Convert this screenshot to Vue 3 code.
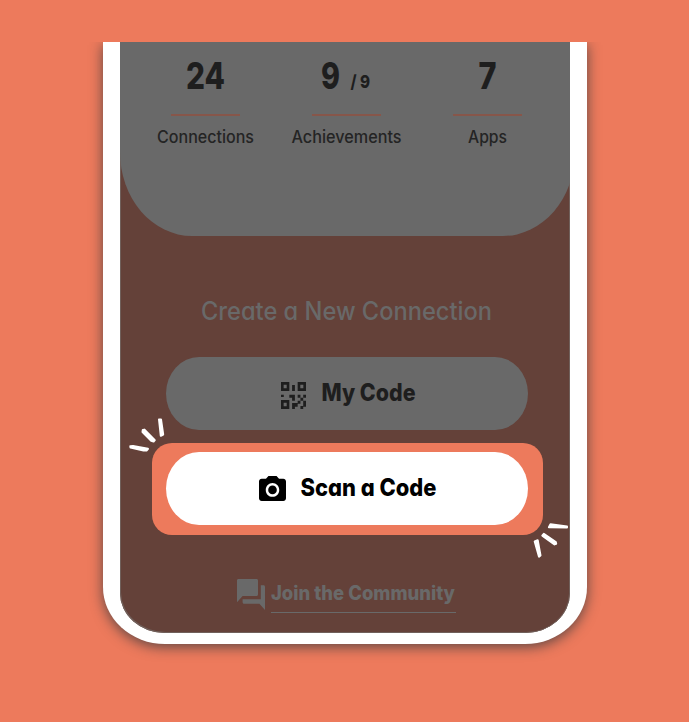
<script setup>
const stats = [
  { label: 'Connections', labelWidth: 97, value: '24', valueX: 51, valueWidth: 39 },
  { label: 'Achievements', labelWidth: 110, value: '9', valueX: 45, valueWidth: 19, total: '/ 9' },
  { label: 'Apps', labelWidth: 39, value: '7', valueX: 61.5, valueWidth: 18 },
]
</script>

<template>
  <main class="stage">
    <div class="phone">
      <div class="screen">
        <section class="profile">
          <div v-for="s in stats" :key="s.label" class="stat">
            <svg class="value" width="141" height="72">
              <text :x="s.valueX" y="46.5" :textLength="s.valueWidth" lengthAdjust="spacingAndGlyphs">{{ s.value }}</text>
              <text v-if="s.total" class="total" x="74.5" y="46" textLength="19.5" lengthAdjust="spacingAndGlyphs">{{ s.total }}</text>
            </svg>
            <hr />
            <svg class="caption" width="141" height="36">
              <text :x="70.5 - s.labelWidth / 2" y="18" :textLength="s.labelWidth" lengthAdjust="spacingAndGlyphs">{{ s.label }}</text>
            </svg>
          </div>
        </section>

        <svg class="heading" width="310" height="40">
          <text x="10" y="26" textLength="291" lengthAdjust="spacingAndGlyphs">Create a New Connection</text>
        </svg>

        <button class="pill">
          <svg class="qr" width="25" height="27" viewBox="3 3 18 18" preserveAspectRatio="none">
            <path fill-rule="evenodd" d="M3 3h6v6H3zM4.900 4.900v2.200h2.200V4.900zM15 3h6v6h-6zM16.900 4.900v2.200h2.200V4.900zM3 15h6v6H3zM4.900 16.900v2.200h2.200v-2.200zM11 5h2v4h-2zM3 11.500h2v1.500H3zM9 11.500h4v4h-2v-2H9zM15 11.500h2v2h-2zM19 11.500h2v2h-2zM17 13.500h2v2h-2zM15 15.500h2v2h-2v2h-2v1.500h-2v-4h4zM19 15.500h2v4h-2zM17 19h2v2h-2z" />
          </svg>
          <svg class="pill-text" width="98" height="34">
            <text x="0.5" y="25" textLength="94" lengthAdjust="spacingAndGlyphs">My Code</text>
          </svg>
        </button>

        <div class="spotlight">
          <button class="pill bright">
            <svg width="27" height="25" viewBox="2 2 20 18" preserveAspectRatio="none">
              <path d="M9 2 7.170 4H4c-1.100 0-2 .9-2 2v12c0 1.100.9 2 2 2h16c1.100 0 2-.9 2-2V6c0-1.100-.9-2-2-2h-3.170L15 2zm3 15c-2.760 0-5-2.240-5-5s2.240-5 5-5 5 2.240 5 5-2.240 5-5 5z" />
              <circle cx="12" cy="12" r="3.200" />
            </svg>
            <svg class="pill-text" width="140" height="34">
              <text x="-0.5" y="25" textLength="136" lengthAdjust="spacingAndGlyphs">Scan a Code</text>
            </svg>
          </button>
          <svg class="spark start" width="40" height="38">
            <path d="M32 3.500 34 3.500 36.200 18.500 33.800 19.800Z" />
            <path d="M15.800 14 17.500 13.600 27.800 24.200 26.600 25.600 24.200 24.800 15.500 16Z" />
            <path d="M3.300 30.200 6 30 21 32.800 19.500 34.600 16.500 34.600 3.500 31.500Z" />
          </svg>
          <svg class="spark end" width="40" height="38">
            <path d="M20.500 3.300 37 5.600 37 6.600 18.900 6.200Z" />
            <path d="M13.800 12.800 12.300 14.600 24.500 23.400 26.200 22.800 25.800 21Z" />
            <path d="M4.700 20.500 7.700 19.300 10.500 34.500 9 35.700Z" />
          </svg>
        </div>

        <a class="community">
          <svg width="28" height="31" viewBox="2 2 20 20" preserveAspectRatio="none">
            <path d="M21 6h-2v9H6v2c0 .55.45 1 1 1h11l4 4V7c0-.55-.45-1-1-1zm-4 6V3c0-.55-.45-1-1-1H3c-.55 0-1 .45-1 1v14l4-4h10c.55 0 1-.45 1-1z" />
          </svg>
          <svg class="link-text" width="185" height="33">
            <text x="0" y="21" textLength="184" lengthAdjust="spacingAndGlyphs">Join the Community</text>
          </svg>
        </a>
      </div>
    </div>
  </main>
</template>

<style>
body {
  background: #ed7a5c;
}
</style>

<style scoped>
.stage {
  box-sizing: border-box;
  height: 680px;
  margin-top: 42px;
  padding-left: 103px;
  overflow: hidden;
  background: #ed7a5c;
  font-family: Inter, "Open Sans", sans-serif;
  font-feature-settings: "cv11";
}
svg {
  overflow: visible;
}
.phone {
  box-sizing: border-box;
  width: 484px;
  height: 602px;
  padding: 0 17px 11.500px;
  background: #fff;
  border-radius: 0 0 62px 62px / 0 0 57px 57px;
  box-shadow: 0 3px 13px rgba(45, 55, 60, 0.75);
}
.screen {
  display: flex;
  flex-direction: column;
  align-items: center;
  box-sizing: border-box;
  width: 450px;
  height: 590.500px;
  overflow: hidden;
  background: #644139;
  border-radius: 0 0 45px 45px / 0 0 40px 40px;
  box-shadow: inset 1px -1px 0 #70605b, inset -1px 0 0 #70605b;
}
.profile {
  display: flex;
  flex: none;
  align-self: flex-start;
  box-sizing: border-box;
  width: 455px;
  height: 193.500px;
  padding-left: 15px;
  background: #696969;
  border-radius: 0 0 72px 72px / 0 0 84px 84px;
}
.stat {
  display: flex;
  flex-direction: column;
  align-items: center;
  width: 141.200px;
}
.value {
  fill: #1e1e1e;
  font-size: 36.500px;
  font-weight: 800;
}
.total {
  font-size: 18px;
}
hr {
  width: 69px;
  height: 1.500px;
  margin: 0;
  border: 0;
  background: #87564a;
}
.caption {
  margin-top: 9px;
  fill: #242424;
  font-size: 17px;
  font-weight: 450;
}
.heading {
  flex: none;
  margin: 58.500px 0 21px 2px;
  fill: #696969;
  font-size: 25px;
  font-weight: 500;
}
.pill {
  display: flex;
  align-items: center;
  justify-content: center;
  flex: none;
  gap: 15px;
  box-sizing: border-box;
  width: 362px;
  height: 73px;
  margin: 2px 0 0 3px;
  padding: 0 0 0 6px;
  border: 0;
  border-radius: 33px / 36.500px;
  background: #696969;
  fill: #1e1e1e;
  font: inherit;
  font-feature-settings: inherit;
}
.pill-text {
  margin-top: -1px;
  font-size: 24px;
  font-weight: 800;
}
.qr {
  margin-top: 3px;
}
.spotlight {
  position: relative;
  display: flex;
  flex: none;
  box-sizing: border-box;
  width: 391px;
  height: 92px;
  margin: 13px 0 0 5px;
  padding: 9px 13px;
  border-radius: 20px;
  background: #ed7a5c;
}
.bright {
  margin: 0 0 0 1px;
  background: #fff;
  fill: #000;
}
.spark {
  position: absolute;
  fill: #fff;
  stroke: #fff;
  stroke-width: 2px;
  stroke-linejoin: round;
}
.start {
  left: -25px;
  top: -27px;
}
.end {
  right: -27px;
  bottom: -24px;
}
.community {
  display: flex;
  align-items: flex-start;
  flex: none;
  gap: 6px;
  margin: 44px 0 0 2px;
  fill: #696969;
}
.link-text {
  border-bottom: 1.500px solid #696969;
  font-size: 20px;
  font-weight: 800;
}
</style>
